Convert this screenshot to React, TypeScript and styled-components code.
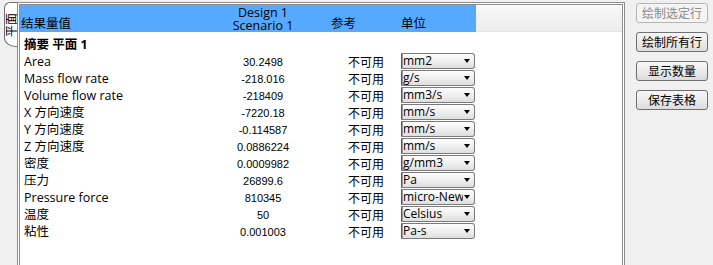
import styled, { createGlobalStyle } from "styled-components";

const GlobalStyle = createGlobalStyle`
  html, body {
    margin: 0;
    padding: 0;
    background: #f0f0f0;
  }
  body {
    font-family: "Open Sans", "Noto Sans CJK SC", sans-serif;
    color: #000;
  }
`;

// 名称 / 值 / 参考 / 单位 / 空白
const COLUMNS = "195px 96px 87px 78px 1fr";

type Result = { name: string; value: string; unit: string };

const rows: Result[] = [
  { name: "Area", value: "30.2498", unit: "mm2" },
  { name: "Mass flow rate", value: "-218.016", unit: "g/s" },
  { name: "Volume flow rate", value: "-218409", unit: "mm3/s" },
  { name: "X 方向速度", value: "-7220.18", unit: "mm/s" },
  { name: "Y 方向速度", value: "-0.114587", unit: "mm/s" },
  { name: "Z 方向速度", value: "0.0886224", unit: "mm/s" },
  { name: "密度", value: "0.0009982", unit: "g/mm3" },
  { name: "压力", value: "26899.6", unit: "Pa" },
  { name: "Pressure force", value: "810345", unit: "micro-Newton" },
  { name: "温度", value: "50", unit: "Celsius" },
  { name: "粘性", value: "0.001003", unit: "Pa-s" },
];

const actions = [
  { label: "绘制选定行", disabled: true },
  { label: "绘制所有行", disabled: false },
  { label: "显示数量", disabled: false },
  { label: "保存表格", disabled: false },
];

export default function App() {
  return (
    <Window>
      <GlobalStyle />
      <TabStrip>
        <Tab>
          <TabLabel>平面</TabLabel>
        </Tab>
      </TabStrip>

      <Panel>
        <HeaderRow>
          <HeadCell $pb={2} $pl={1}>结果量值</HeadCell>
          <HeadCell $center>
            <span>Design 1</span>
            <span>Scenario 1</span>
          </HeadCell>
          <HeadCell $pb={2} $pl={20}>参考</HeadCell>
          <HeadCell $pb={2} $pl={3}>单位</HeadCell>
          <HeadFiller />
        </HeaderRow>

        <Body>
          <Row>
            <NameCell $bold>摘要 平面 1</NameCell>
          </Row>
          {rows.map((r) => (
            <Row key={r.name}>
              <NameCell>{r.name}</NameCell>
              <ValueCell>{r.value}</ValueCell>
              <RefCell>不可用</RefCell>
              <UnitCell>
                <Select>
                  <SelectText>{r.unit}</SelectText>
                  <Arrow />
                </Select>
              </UnitCell>
            </Row>
          ))}
        </Body>
      </Panel>

      <Side>
        {actions.map((a) => (
          <Button key={a.label} disabled={a.disabled}>
            {a.label}
          </Button>
        ))}
      </Side>
    </Window>
  );
}

const Window = styled.div`
  display: flex;
  align-items: flex-start;
  width: 713px;
  height: 265px;
  overflow: hidden;
`;

const TabStrip = styled.div`
  padding: 2px 0 0 4px;
`;

const Tab = styled.div`
  width: 13px;
  height: 45px;
  box-sizing: border-box;
  padding-top: 10px;
  background: #fff;
  border: 1px solid #6e6e6e;
  border-right: none;
  border-radius: 6px 0 0 12px / 6px 0 0 9px;
`;

// 文字从下往上读
const TabLabel = styled.span`
  display: block;
  writing-mode: vertical-rl;
  text-orientation: sideways;
  transform: rotate(180deg);
  font: 12px/12px "Noto Sans CJK SC", sans-serif;
`;

const Panel = styled.div`
  width: 608px;
  height: 290px;
  margin-top: 2px;
  box-sizing: border-box;
  border: 3px double #8d8d8d;
  background: #fff;
`;

const HeaderRow = styled.div`
  display: grid;
  grid-template-columns: ${COLUMNS};
  height: 27px;
`;

const HeadCell = styled.div<{ $center?: boolean; $pb?: number; $pl?: number }>`
  background: #55aaff;
  display: flex;
  flex-direction: column;
  justify-content: flex-end;
  align-items: ${(p) => (p.$center ? "center" : "flex-start")};
  padding-left: ${(p) => p.$pl ?? 0}px;
  padding-bottom: ${(p) => p.$pb ?? 0}px;
  font-size: 12.5px;
  line-height: 13px;
  white-space: nowrap;
`;

const HeadFiller = styled.div`
  background: linear-gradient(#fafafa, #f3f3f3 40%, #eeeeee);
  border-bottom: 1px solid #e2e2e2;
`;

const Body = styled.div`
  padding-top: 4px;
`;

const Row = styled.div`
  display: grid;
  grid-template-columns: ${COLUMNS};
  height: 17px;
`;

const NameCell = styled.div<{ $bold?: boolean }>`
  padding-left: 4px;
  font-size: 12.5px;
  line-height: 17px;
  font-weight: ${(p) => (p.$bold ? 700 : 400)};
  white-space: nowrap;
`;

const ValueCell = styled.div`
  padding-top: 1px;
  text-align: center;
  font: 11px/17px "Liberation Sans", sans-serif;
  white-space: nowrap;
`;

const RefCell = styled.div`
  padding-left: 37px;
  font: 12px/17px "Noto Sans CJK SC", sans-serif;
  white-space: nowrap;
`;

const UnitCell = styled.div`
  padding-left: 3px;
`;

const Select = styled.div`
  width: 74px;
  height: 16px;
  box-sizing: border-box;
  display: flex;
  align-items: center;
  padding-left: 1px;
  border: 1px solid #7a7a7a;
  border-left-color: #5c5c5c;
  border-radius: 0 3px 3px 0;
  background: linear-gradient(#fdfdfd, #f0f0f0 50%, #dedede);
  box-shadow: inset 1px 0 0 #9a9a9a;
`;

// 单位名过长时在箭头前截断（micro-Newton）
const SelectText = styled.span`
  flex: 1;
  min-width: 0;
  overflow-x: clip;
  overflow-y: visible;
  white-space: nowrap;
  font-size: 12px;
  line-height: 14px;
`;

const Arrow = styled.span`
  flex: none;
  width: 0;
  height: 0;
  margin: 0 4px 0 1px;
  border-left: 3.5px solid transparent;
  border-right: 3.5px solid transparent;
  border-top: 4px solid #000;
`;

const Side = styled.div`
  display: flex;
  flex-direction: column;
  gap: 9px;
  padding-top: 3px;
  margin-left: 11px;
`;

const Button = styled.button`
  width: 72px;
  height: 20px;
  box-sizing: border-box;
  padding: 0;
  border: 1px solid #707070;
  border-radius: 3px;
  background: linear-gradient(#f6f6f6, #ececec 50%, #dcdcdc);
  font: 12px/18px "Noto Sans CJK SC", sans-serif;
  color: #000;

  &:disabled {
    border-color: #b5b5b5;
    background: #f4f4f4;
    color: #8a8a8a;
  }
`;
